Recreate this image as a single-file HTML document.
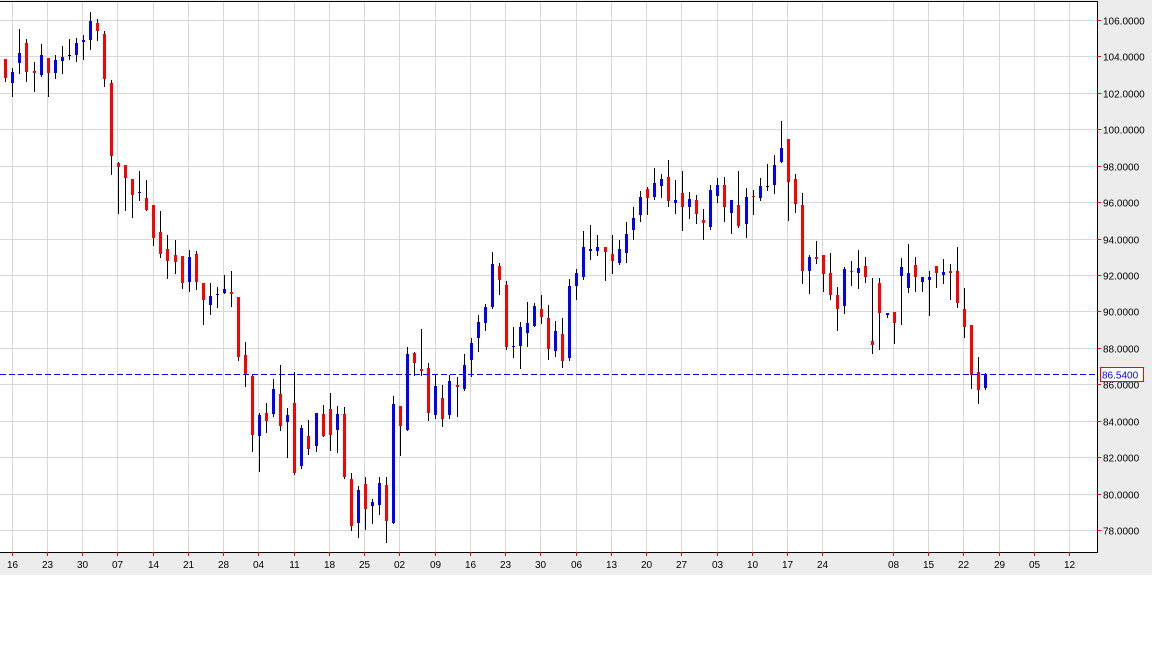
<!DOCTYPE html>
<html><head><meta charset="utf-8"><style>
html,body{margin:0;padding:0;background:#fff;width:1152px;height:648px;overflow:hidden}
svg{display:block}
text{font-family:"Liberation Sans",sans-serif;font-size:10px}
</style></head><body>
<svg id="s" width="1152" height="648" xmlns="http://www.w3.org/2000/svg">
<rect x="0" y="0" width="1152" height="575" fill="#ececec"/>
<rect x="0" y="1" width="1097" height="551" fill="#fff"/>
<g id="grid"></g>
<g id="c"></g>
<line x1="0" y1="374.5" x2="1097" y2="374.5" stroke="#0000ff" stroke-width="1" stroke-dasharray="6,3"/>
<line x1="0" y1="1.5" x2="1098" y2="1.5" stroke="#000"/>
<line x1="1097.5" y1="1" x2="1097.5" y2="552" stroke="#000"/>
<line x1="0" y1="552.5" x2="1098" y2="552.5" stroke="#000"/>
<g id="ax"></g>
<rect x="1100.5" y="367.5" width="43" height="14" fill="#fff" stroke="#ff0000"/>
<text x="1102" y="378.5" fill="#0000ff">86.5400</text>
</svg>
<script>
var NS="http://www.w3.org/2000/svg";
function el(p,t,a,txt){var e=document.createElementNS(NS,t);for(var k in a)e.setAttribute(k,a[k]);if(txt)e.textContent=txt;p.appendChild(e);return e;}
var g=document.getElementById('grid'),ax=document.getElementById('ax'),c=document.getElementById('c');
for(var k=0;k<15;k++){var y=Math.round(20+k*36.43)+0.5;el(g,'line',{x1:0,y1:y,x2:1097,y2:y,stroke:'#d8d8d8'});
el(ax,'line',{x1:1097,y1:y,x2:1101,y2:y,stroke:'#ff0000'});
el(ax,'text',{x:1103,y:y+4,fill:'#000'},(106-2*k).toFixed(4));}
var labs=["16","23","30","07","14","21","28","04","11","18","25","02","09","16","23","30","06","13","20","27","03","10","17","24","","08","15","22","29","05","12"];
for(var k=0;k<labs.length;k++){if(!labs[k])continue;var x=Math.round(11.7+35.25*k)+0.5;el(g,'line',{x1:x,y1:1,x2:x,y2:552,stroke:'#d8d8d8'});
el(ax,'line',{x1:x,y1:552,x2:x,y2:556,stroke:'#ff0000'});
el(ax,'text',{x:x,y:568,fill:'#000','text-anchor':'middle'},labs[k]);}
var R='#ff0000',B='#0000ff',K='#000';
var d=[
[59,78,59,82,R],[72,83,68,97,B],[53,63,29,74,B],[43,72,39,82,R],[71,73,62,92,R],[55,75,44,77,B],[58,73,58,97,R],[60,73,55,79,B],[57,61,46,74,B],[55,56,39,60,K],
[43,55,38,62,B],[40,42,35,60,B],[21,40,12,50,B],[23,31,19,41,R],[34,79,31,87,R],[83,156,80,175,R],[163,167,162,214,R],[165,178,165,211,R],[179,195,179,218,R],[192,193,171,201,B],
[198,210,180,211,R],[205,238,205,246,R],[232,254,211,258,R],[249,261,235,279,R],[255,262,240,274,R],[256,283,256,289,R],[257,282,250,292,B],[254,282,251,290,R],[283,300,283,325,R],[296,305,283,315,B],
[294,295,287,308,B],[289,293,275,294,B],[292,294,271,307,R],[297,357,297,361,R],[355,374,342,387,R],[376,435,374,452,R],[415,436,413,472,B],[413,421,403,433,R],[389,414,379,417,B],[394,426,365,431,R],
[415,422,408,458,B],[403,473,372,475,R],[428,466,425,469,B],[436,449,420,455,R],[413,446,413,452,B],[414,436,405,437,R],[409,435,393,451,R],[414,430,406,453,B],[414,477,407,479,R],[479,526,473,531,R],
[490,523,486,538,B],[484,509,477,530,R],[502,506,499,524,B],[483,505,477,515,B],[485,521,477,543,R],[404,523,396,524,B],[406,426,406,456,R],[354,430,347,431,B],[353,363,352,376,R],[369,371,329,376,R],
[368,413,363,421,R],[386,415,375,419,B],[398,419,385,427,R],[381,415,375,419,B],[385,387,377,417,R],[365,389,354,391,B],[343,360,338,377,B],[322,338,315,352,B],[307,323,304,331,B],[264,307,252,309,B],
[266,280,263,295,R],[285,347,281,350,R],[346,347,327,358,B],[327,346,322,369,B],[323,333,302,347,B],[306,326,303,327,B],[309,317,295,324,R],[318,349,305,360,R],[331,351,321,357,B],[334,361,318,368,R],
[286,358,279,361,B],[273,286,269,300,B],[247,277,231,280,B],[249,251,225,260,B],[247,251,235,256,B],[247,252,247,281,R],[254,261,235,274,R],[249,263,240,265,B],[234,253,222,263,B],[218,230,207,240,B],
[197,215,191,222,B],[189,198,187,215,R],[183,197,168,200,B],[179,186,174,198,B],[177,201,160,207,R],[200,203,180,214,B],[193,207,171,231,R],[199,207,192,219,B],[200,214,195,224,R],[220,223,209,240,R],
[190,227,185,230,B],[185,196,178,203,B],[185,207,177,222,R],[200,213,200,234,B],[205,226,171,228,R],[197,224,188,238,B],[196,197,190,215,R],[186,198,178,201,B],[186,187,164,191,K],[165,185,155,194,B],
[148,162,121,163,B],[139,182,139,221,R],[179,204,174,213,R],[205,271,193,284,R],[257,271,255,294,B],[257,259,241,264,R],[255,274,255,292,R],[273,295,253,300,R],[295,309,287,331,R],[269,306,267,314,B],
[271,272,261,286,R],[268,273,250,289,B],[266,277,257,283,R],[341,345,278,354,R],[283,313,278,350,R],[313,315,313,318,B],[312,323,312,344,R],[267,276,258,325,B],[273,288,244,293,B],[265,277,257,292,R],
[277,282,277,292,B],[277,280,271,316,B],[266,273,266,288,R],[272,275,259,284,B],[271,273,264,300,R],[271,303,247,308,R],[309,327,288,338,R],[325,375,325,389,R],[372,390,357,404,R],[374,388,373,390,B]
];
for(var i=0;i<d.length;i++){var q=d[i];var x=Math.round(5.3+7.05*i);
el(c,'rect',{x:x,y:q[2],width:1,height:Math.max(1,q[3]-q[2]),fill:'#000'});
el(c,'rect',{x:x-1,y:q[0],width:3,height:Math.max(1,q[1]-q[0]),fill:q[4]});}
</script>
</body></html>
